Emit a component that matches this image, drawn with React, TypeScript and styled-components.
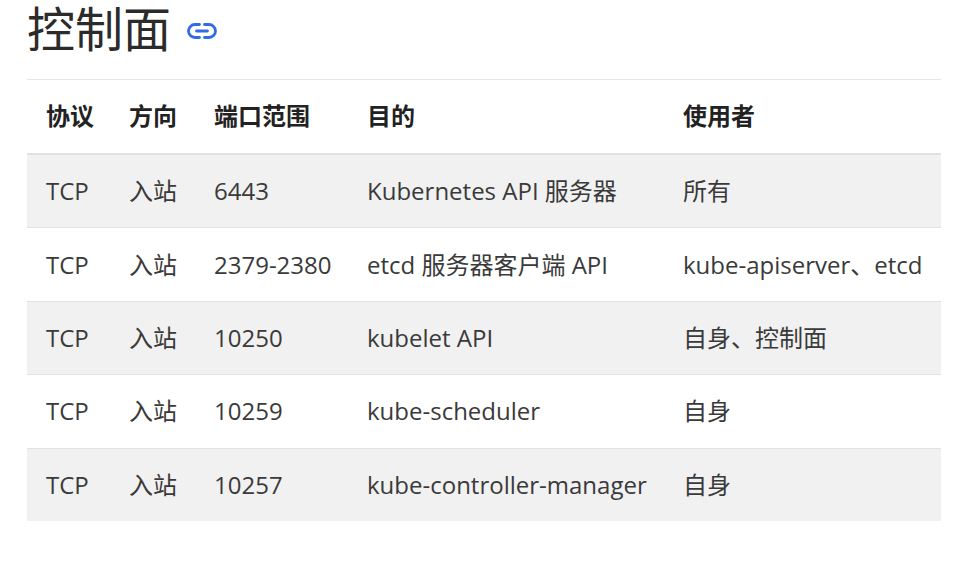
import React from "react";
import styled, { createGlobalStyle } from "styled-components";

const Global = createGlobalStyle`
  html, body { margin: 0; padding: 0; background: #fff; }
  body { font-family: "Open Sans", "Noto Sans CJK SC", sans-serif; color: #222; }
`;

const Page = styled.main`
  width: 955px;
  min-height: 573px;
  padding: 0 14px 0 27px;
  box-sizing: border-box;
`;

const Heading = styled.h2`
  display: flex;
  align-items: center;
  gap: 15px;
  height: 56px;
  margin: 0 0 23px;
  padding-top: 1px;
  box-sizing: border-box;
  font-size: 48px;
  font-weight: 400;
  line-height: 55px;
  color: #2b2b2b;
`;

const LinkIcon = styled.svg`
  width: 32px;
  height: 32px;
  margin-top: 5px;
  fill: none;
  stroke: #326ce5;
  stroke-width: 2.8;
  stroke-linecap: round;
`;

const Table = styled.table`
  width: 914px;
  border-collapse: collapse;
  table-layout: fixed;
  font-size: 24px;
  line-height: 36px;
`;

const HeadRow = styled.tr`
  height: 74px;
  border-top: 1px solid #e3e5e8;
  border-bottom: 2px solid #dee2e6;
`;

const HeadCell = styled.th`
  padding: 0 0 0 19px;
  text-align: left;
  font-weight: 700;
  vertical-align: middle;
  color: #222;
`;

const BodyRow = styled.tr<{ $shaded: boolean }>`
  height: 73.4px;
  background: ${(p) => (p.$shaded ? "#f1f1f1" : "#fff")};
  border-bottom: 1px solid #dee2e6;
  &:first-child { height: 74.4px; }
  &:last-child { height: 73px; border-bottom: 0; }
`;

const Cell = styled.td`
  padding: 0 0 0 19px;
  vertical-align: middle;
  white-space: nowrap;
  color: #3a3a3a;
`;

const columns = [83, 85, 153, 316, 277];
const heads = ["协议", "方向", "端口范围", "目的", "使用者"];
const rows = [
  ["TCP", "入站", "6443", "Kubernetes API 服务器", "所有"],
  ["TCP", "入站", "2379-2380", "etcd 服务器客户端 API", "kube-apiserver、etcd"],
  ["TCP", "入站", "10250", "kubelet API", "自身、控制面"],
  ["TCP", "入站", "10259", "kube-scheduler", "自身"],
  ["TCP", "入站", "10257", "kube-controller-manager", "自身"],
];

export default function App() {
  return (
    <Page>
      <Global />
      <Heading>
        控制面
        <LinkIcon viewBox="0 0 32 32" aria-hidden="true">
          <path d="M13.5 9.5H9a6.5 6.5 0 0 0 0 13h4.5" />
          <path d="M18.5 9.5H23a6.5 6.5 0 0 1 0 13h-4.5" />
          <path d="M10.5 16h11" />
        </LinkIcon>
      </Heading>
      <Table>
        <colgroup>
          {columns.map((w) => (
            <col key={w} style={{ width: w }} />
          ))}
        </colgroup>
        <thead>
          <HeadRow>
            {heads.map((h) => (
              <HeadCell key={h}>{h}</HeadCell>
            ))}
          </HeadRow>
        </thead>
        <tbody>
          {rows.map((row, i) => (
            <BodyRow key={row[2]} $shaded={i % 2 === 0}>
              {row.map((c, j) => (
                <Cell key={j}>{c}</Cell>
              ))}
            </BodyRow>
          ))}
        </tbody>
      </Table>
    </Page>
  );
}
